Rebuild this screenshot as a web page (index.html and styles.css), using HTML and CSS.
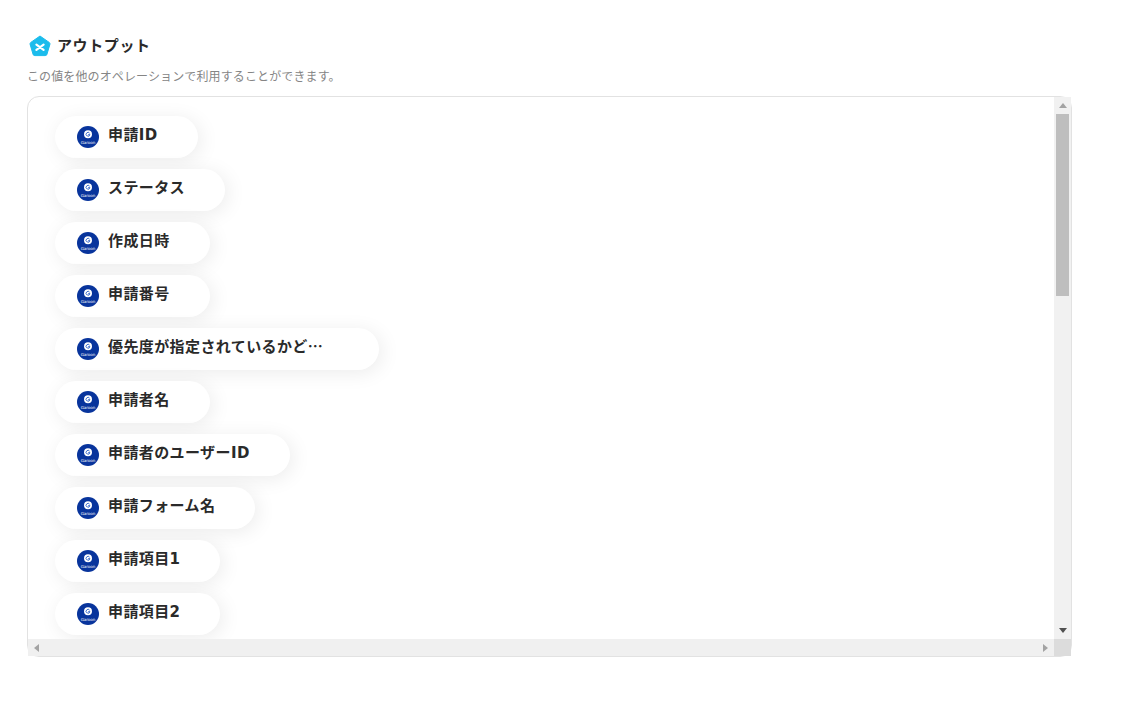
FILE: index.html
```html
<!DOCTYPE html>
<html lang="ja">
    <head>
        <title>アウトプット</title>
        <link rel="stylesheet" href="styles.css">
    </head>
    <body>
        <div class="output_section">
            <div class="title_row">
                <svg class="title_icon" viewBox="0 0 22 22">
                    <path d="M11 1 L20.2 7.4 Q21.2 8.2 20.9 9.4 L17.9 19.4 Q17.5 20.6 16.2 20.6 L5.8 20.6 Q4.5 20.6 4.1 19.4 L1.1 9.4 Q0.8 8.2 1.8 7.4 Z" fill="#1bbcec" stroke="#1bbcec" stroke-linejoin="round"/>
                    <path d="M7.4 9.6 L14.6 14.8 M14.6 9.6 L7.4 14.8" stroke="#fff" stroke-width="2.2" stroke-linecap="round"/>
                </svg>
                <h2>アウトプット</h2>
            </div>
            <p class="small_text">この値を他のオペレーションで利用することができます。</p>
            <div class="output_box">
                <div class="output_list">
                    <div class="pill"><svg class="app_icon" viewBox="0 0 22 22"><circle cx="11" cy="11" r="11" fill="#08349c"/><circle cx="11" cy="8.2" r="4" fill="#fff"/><path d="M12.6 7.2 A1.9 1.9 0 1 0 12.9 8.6 H11.2" fill="none" stroke="#2f62c8" stroke-width="0.9"/><text x="11" y="17.6" class="app_label">Garoon</text></svg><span class="pill_text">申請ID</span></div>
                    <div class="pill"><svg class="app_icon" viewBox="0 0 22 22"><circle cx="11" cy="11" r="11" fill="#08349c"/><circle cx="11" cy="8.2" r="4" fill="#fff"/><path d="M12.6 7.2 A1.9 1.9 0 1 0 12.9 8.6 H11.2" fill="none" stroke="#2f62c8" stroke-width="0.9"/><text x="11" y="17.6" class="app_label">Garoon</text></svg><span class="pill_text">ステータス</span></div>
                    <div class="pill"><svg class="app_icon" viewBox="0 0 22 22"><circle cx="11" cy="11" r="11" fill="#08349c"/><circle cx="11" cy="8.2" r="4" fill="#fff"/><path d="M12.6 7.2 A1.9 1.9 0 1 0 12.9 8.6 H11.2" fill="none" stroke="#2f62c8" stroke-width="0.9"/><text x="11" y="17.6" class="app_label">Garoon</text></svg><span class="pill_text">作成日時</span></div>
                    <div class="pill"><svg class="app_icon" viewBox="0 0 22 22"><circle cx="11" cy="11" r="11" fill="#08349c"/><circle cx="11" cy="8.2" r="4" fill="#fff"/><path d="M12.6 7.2 A1.9 1.9 0 1 0 12.9 8.6 H11.2" fill="none" stroke="#2f62c8" stroke-width="0.9"/><text x="11" y="17.6" class="app_label">Garoon</text></svg><span class="pill_text">申請番号</span></div>
                    <div class="pill"><svg class="app_icon" viewBox="0 0 22 22"><circle cx="11" cy="11" r="11" fill="#08349c"/><circle cx="11" cy="8.2" r="4" fill="#fff"/><path d="M12.6 7.2 A1.9 1.9 0 1 0 12.9 8.6 H11.2" fill="none" stroke="#2f62c8" stroke-width="0.9"/><text x="11" y="17.6" class="app_label">Garoon</text></svg><span class="pill_text cjk_text">優先度が指定されているかど…</span></div>
                    <div class="pill"><svg class="app_icon" viewBox="0 0 22 22"><circle cx="11" cy="11" r="11" fill="#08349c"/><circle cx="11" cy="8.2" r="4" fill="#fff"/><path d="M12.6 7.2 A1.9 1.9 0 1 0 12.9 8.6 H11.2" fill="none" stroke="#2f62c8" stroke-width="0.9"/><text x="11" y="17.6" class="app_label">Garoon</text></svg><span class="pill_text">申請者名</span></div>
                    <div class="pill"><svg class="app_icon" viewBox="0 0 22 22"><circle cx="11" cy="11" r="11" fill="#08349c"/><circle cx="11" cy="8.2" r="4" fill="#fff"/><path d="M12.6 7.2 A1.9 1.9 0 1 0 12.9 8.6 H11.2" fill="none" stroke="#2f62c8" stroke-width="0.9"/><text x="11" y="17.6" class="app_label">Garoon</text></svg><span class="pill_text">申請者のユーザーID</span></div>
                    <div class="pill"><svg class="app_icon" viewBox="0 0 22 22"><circle cx="11" cy="11" r="11" fill="#08349c"/><circle cx="11" cy="8.2" r="4" fill="#fff"/><path d="M12.6 7.2 A1.9 1.9 0 1 0 12.9 8.6 H11.2" fill="none" stroke="#2f62c8" stroke-width="0.9"/><text x="11" y="17.6" class="app_label">Garoon</text></svg><span class="pill_text">申請フォーム名</span></div>
                    <div class="pill"><svg class="app_icon" viewBox="0 0 22 22"><circle cx="11" cy="11" r="11" fill="#08349c"/><circle cx="11" cy="8.2" r="4" fill="#fff"/><path d="M12.6 7.2 A1.9 1.9 0 1 0 12.9 8.6 H11.2" fill="none" stroke="#2f62c8" stroke-width="0.9"/><text x="11" y="17.6" class="app_label">Garoon</text></svg><span class="pill_text">申請項目1</span></div>
                    <div class="pill"><svg class="app_icon" viewBox="0 0 22 22"><circle cx="11" cy="11" r="11" fill="#08349c"/><circle cx="11" cy="8.2" r="4" fill="#fff"/><path d="M12.6 7.2 A1.9 1.9 0 1 0 12.9 8.6 H11.2" fill="none" stroke="#2f62c8" stroke-width="0.9"/><text x="11" y="17.6" class="app_label">Garoon</text></svg><span class="pill_text">申請項目2</span></div>
                </div>
                <div class="bar_v">
                    <div class="bar_btn"><span class="arrow_up"></span></div>
                    <div class="bar_v_track"><div class="bar_v_thumb"></div></div>
                    <div class="bar_btn"><span class="arrow_down"></span></div>
                </div>
                <div class="bar_h">
                    <div class="bar_btn"><span class="arrow_left"></span></div>
                    <div class="bar_btn"><span class="arrow_right"></span></div>
                </div>
                <div class="bar_corner"></div>
            </div>
        </div>
    </body>
</html>
```

FILE: styles.css
```css
body {
    margin: 0;
    background: #fff;
    color: #2a2a2a;
    font-family: "DejaVu Sans", "Noto Sans CJK JP", sans-serif;
}
.output_section {
    padding: 35px 0 0 27px;
    width: 1045px;
}
.title_row {
    display: flex;
    align-items: center;
    gap: 6px;
    padding-left: 2px;
    height: 22px;
}
.title_icon {
    width: 22px;
    height: 22px;
}
h2 {
    margin: 0;
    font-size: 15px;
    font-weight: bold;
    letter-spacing: 0.6px;
    position: relative;
    top: -2px;
}
.small_text {
    margin: 11px 0 10px 0;
    font-size: 12px;
    line-height: 18px;
    letter-spacing: 0.12px;
    color: #858585;
}
.output_box {
    box-sizing: border-box;
    width: 1045px;
    height: 561px;
    border: 1px solid #e2e2e2;
    border-radius: 12px;
    display: grid;
    grid-template-columns: 1fr 17px;
    grid-template-rows: 542px 17px;
}
.output_list {
    overflow: hidden;
    padding: 19px 0 0 27px;
}
.pill {
    display: flex;
    align-items: center;
    width: fit-content;
    height: 42px;
    margin-bottom: 11px;
    padding: 0 40px 0 22px;
    border-radius: 21px;
    background: #fff;
    box-shadow: 3px 3px 20px rgba(0, 0, 0, 0.08);
}
.app_icon {
    width: 22px;
    height: 22px;
    flex-shrink: 0;
}
.app_label {
    fill: #fff;
    font-size: 4px;
    text-anchor: middle;
}
.pill_text {
    margin-left: 9px;
    font-size: 15px;
    font-weight: bold;
    letter-spacing: 0.4px;
    white-space: nowrap;
    position: relative;
    top: -4px;
}
.cjk_text {
    font-family: "Noto Sans CJK JP", sans-serif;
    padding-right: 16px;
}
.bar_v {
    display: flex;
    flex-direction: column;
    background: #f1f1f1;
}
.bar_v_track {
    flex: 1;
    padding: 0 2px;
}
.bar_v_thumb {
    height: 182px;
    background: #bebebe;
}
.bar_h {
    display: flex;
    justify-content: space-between;
    background: #f0f0f0;
}
.bar_corner {
    background: #dcdcdc;
}
.bar_btn {
    width: 17px;
    height: 17px;
    display: flex;
    align-items: center;
    justify-content: center;
}
.arrow_up {
    border: 4px solid transparent;
    border-top: 0;
    border-bottom: 5px solid #a3a3a3;
}
.arrow_down {
    border: 4px solid transparent;
    border-bottom: 0;
    border-top: 5px solid #505050;
}
.arrow_left {
    border: 4px solid transparent;
    border-left: 0;
    border-right: 5px solid #a3a3a3;
}
.arrow_right {
    border: 4px solid transparent;
    border-right: 0;
    border-left: 5px solid #a3a3a3;
}
```
